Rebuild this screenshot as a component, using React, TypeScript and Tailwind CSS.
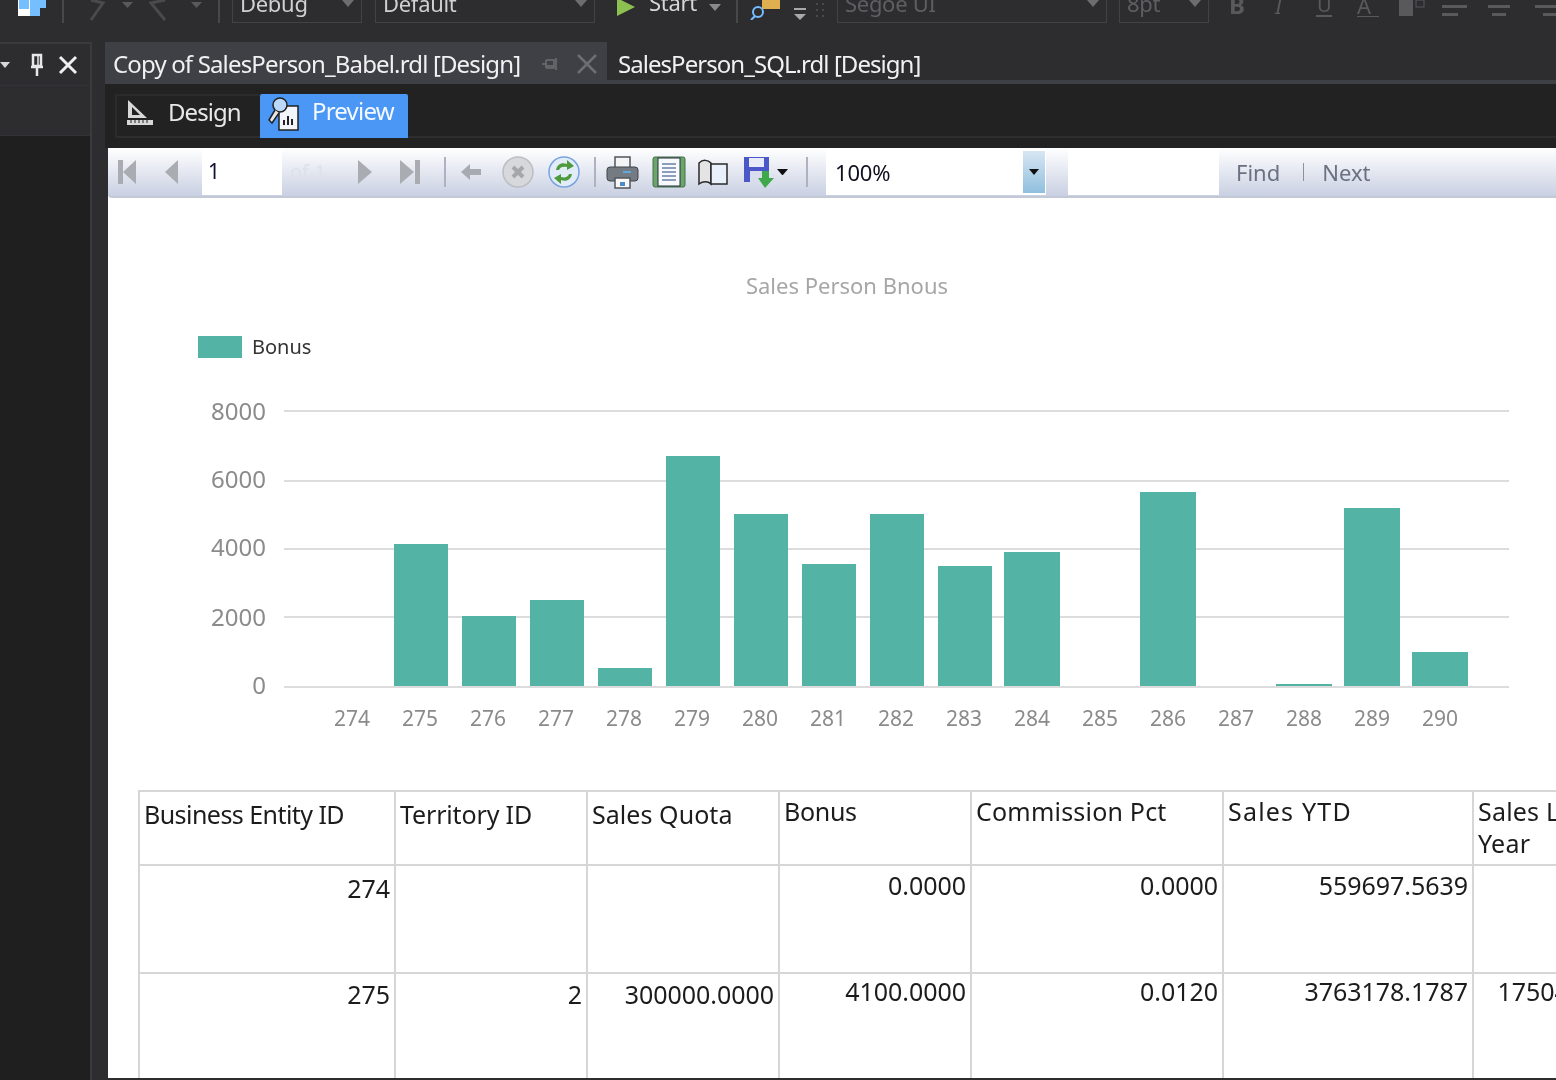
import React from "react";

const FONT = { fontFamily: '"Noto Sans", "Open Sans", sans-serif' };

const bars: [number, number, number][] = [
  [394, 448, 544], [462, 516, 616], [530, 584, 600], [598, 652, 668], [666, 720, 456],
  [734, 788, 514], [802, 856, 564], [870, 924, 514], [938, 992, 566], [1004, 1060, 552],
  [1140, 1196, 492], [1276, 1332, 684], [1344, 1400, 508], [1412, 1468, 652],
];
const grid: [number, string, number][] = [[411, "8000", 420], [481, "6000", 488], [549, "4000", 556], [617, "2000", 626], [687, "0", 694]];
const xLabels = ["274","275","276","277","278","279","280","281","282","283","284","285","286","287","288","289","290"];

function Caret({ color = "#6d6d70", w = 12 }: { color?: string; w?: number }) {
  return (
    <svg width={w} height={w / 2 + 1} viewBox="0 0 12 7"><path d="M0 0h12L6 7z" fill={color} /></svg>
  );
}

function Combo({ label, w, text = "#d0d0d0", ml }: { label: string; w: string; text?: string; ml: string }) {
  return (
    <div className={`${w} ${ml} h-[40px] border border-[#434346] flex items-center justify-between pl-[7px] pr-[7px] shrink-0`}>
      <span className="text-[22px] leading-none tracking-[-0.3px]" style={{ color: text }}>{label}</span>
      <Caret />
    </div>
  );
}

function TopToolbar() {
  return (
    <div className="h-[23px] flex items-end overflow-hidden shrink-0">
      <svg width="30" height="23" viewBox="0 0 30 23" className="ml-[17px] shrink-0">
        <rect x="1" y="0" width="12" height="16" fill="#ffffff" />
        <path d="M2 0h10v9H2z" fill="#75beff" />
        <path d="M13 0h16v8h-6v8h-10z" fill="#75beff" />
      </svg>
      <div className="w-[2px] h-[23px] bg-[#48484b] ml-[15px] shrink-0" />
      <svg width="143" height="23" viewBox="0 0 143 23" className="ml-[11px] shrink-0">
        <path d="M16 0 L28 3 L16 20" stroke="#4a4a4d" strokeWidth="3" fill="none" />
        <path d="M47 2h11l-5.500 6z" fill="#59595c" />
        <path d="M90 0 L76 3 L90 20" stroke="#4a4a4d" strokeWidth="3" fill="none" />
        <path d="M116 2h11l-5.500 6z" fill="#59595c" />
      </svg>
      <div className="w-[2px] h-[23px] bg-[#48484b] shrink-0" />
      <Combo label="Debug" w="w-[130px]" ml="ml-[12px]" />
      <Combo label="Default" w="w-[220px]" ml="ml-[13px]" />
      <svg width="20" height="18" viewBox="0 0 20 18" className="ml-[21px] mb-[7px] shrink-0"><path d="M1 0 L19 9 L1 18z" fill="#8cc152" /></svg>
      <span className="text-[22px] leading-none tracking-[-0.3px] text-[#d8d8d8] ml-[13px] mb-[10px] w-[47px] shrink-0">Start</span>
      <div className="ml-[13px] mb-[12px]"><Caret color="#8a8a8d" /></div>
      <div className="w-[2px] h-[23px] bg-[#48484b] ml-[15px] shrink-0" />
      <svg width="32" height="20" viewBox="0 0 32 20" className="ml-[12px] mb-[3px] shrink-0">
        <path d="M12 0h18v9H12z" fill="#e0b050" />
        <circle cx="8" cy="12" r="5" stroke="#75beff" strokeWidth="2" fill="none" />
        <path d="M5 16 L1 20" stroke="#75beff" strokeWidth="2" />
      </svg>
      <svg width="14" height="20" viewBox="0 0 14 20" className="ml-[11px] shrink-0">
        <rect x="1" y="5" width="12" height="2" fill="#a8a8a8" /><path d="M1 11h12l-6 6z" fill="#a8a8a8" />
      </svg>
      <svg width="12" height="22" viewBox="0 0 12 22" className="ml-[8px] shrink-0"><g fill="#49494c"><rect x="1" y="2" width="2" height="2" /><rect x="7" y="2" width="2" height="2" /><rect x="1" y="8" width="2" height="2" /><rect x="7" y="8" width="2" height="2" /><rect x="1" y="14" width="2" height="2" /><rect x="7" y="14" width="2" height="2" /></g></svg>
      <Combo label="Segoe UI" w="w-[270px]" ml="ml-[10px]" text="#5f5f62" />
      <Combo label="8pt" w="w-[90px]" ml="ml-[12px]" text="#5f5f62" />
      <svg width="330" height="23" viewBox="0 0 330 23" className="ml-[20px] shrink-0">
        <g fill="#59595c" fontFamily="Noto Sans">
          <text x="0" y="14" fontSize="24" fontWeight="700">B</text>
          <text x="46" y="14" fontSize="22" fontStyle="italic">I</text>
          <text x="88" y="12" fontSize="20">U</text>
          <rect x="87" y="15" width="16" height="2" />
          <text x="128" y="14" fontSize="22">A</text>
          <rect x="128" y="16" width="22" height="1" />
          <rect x="170" y="0" width="14" height="16" />
          <rect x="187" y="0" width="8" height="7" fill="none" stroke="#59595c" />
          <rect x="213" y="5" width="25" height="3" /><rect x="213" y="13" width="16" height="3" />
          <rect x="259" y="5" width="22" height="3" /><rect x="263" y="13" width="14" height="3" />
          <rect x="306" y="5" width="25" height="3" /><rect x="314" y="13" width="18" height="3" />
        </g>
      </svg>
    </div>
  );
}

function LeftPanel() {
  return (
    <div className="w-[92px] shrink-0 flex flex-col border-r-2 border-[#3a3a3d] border-t-2">
      <div className="h-[42px] bg-[#2d2d30] border-b border-[#333337] flex items-center justify-end pr-[12px] gap-[14px] shrink-0">
        <svg width="10" height="6" viewBox="0 0 10 6" className="mr-auto"><path d="M0 0h10L5 6z" fill="#d8d8d8" /></svg>
        <svg width="14" height="24" viewBox="0 0 14 24"><path d="M3 2h8v11H3zM1 14h12M7 14v9" stroke="#e8e8e8" strokeWidth="2.500" fill="none" /><path d="M8 3v10" stroke="#e8e8e8" strokeWidth="1.500" /></svg>
        <svg width="20" height="20" viewBox="0 0 20 20"><path d="M2 2 L18 18 M18 2 L2 18" stroke="#efefef" strokeWidth="3" /></svg>
      </div>
      <div className="h-[50px] bg-[#2d2d30] border-b border-[#333337] shrink-0" />
      <div className="flex-1 bg-[#1f1f20]" />
    </div>
  );
}

function NavIcon({ kind }: { kind: "first" | "prev" | "next" | "last" }) {
  const d = {
    first: "M2 0h5v24H2zM20 0v24L7 12z",
    prev: "M16 0v24L3 12z",
    next: "M1 0v24L15 12z",
    last: "M0 0v24L14 12zM15 0h5v24h-5z",
  }[kind];
  return <svg width="20" height="24" viewBox="0 0 20 24" className="shrink-0"><path d={d} fill="#a9adb1" /></svg>;
}

function Sep({ ml }: { ml: string }) {
  return <div className={`${ml} w-[2px] h-[30px] bg-[#aeb2c0] shrink-0`} />;
}

function ReportToolbar() {
  return (
    <div className="h-[50px] shrink-0 flex items-center rounded-bl-[4px] bg-gradient-to-b from-white to-[#c9d0e2] border-b-2 border-[#c3c8d6]">
      <div className="ml-[8px]"><NavIcon kind="first" /></div>
      <div className="ml-[26px]"><NavIcon kind="prev" /></div>
      <div className="ml-[20px] w-[80px] h-[46px] bg-white flex items-center pl-[6px] text-[21px] text-[#101030] shrink-0">1</div>
      <span className="ml-[8px] w-[48px] text-[20px] text-[#dde1ec] shrink-0">of 1</span>
      <div className="ml-[19px]"><NavIcon kind="next" /></div>
      <div className="ml-[23px]"><NavIcon kind="last" /></div>
      <Sep ml="ml-[24px]" />
      <svg width="20" height="18" viewBox="0 0 20 18" className="ml-[15px] shrink-0"><path d="M0 9 L9 1v5h11v6H9v5z" fill="#a7abb0" /></svg>
      <svg width="32" height="32" viewBox="0 0 32 32" className="ml-[21px] shrink-0">
        <circle cx="16" cy="16" r="15" fill="#d6d8dc" stroke="#bcbec2" strokeWidth="1.500" />
        <path d="M11 11 L21 21 M21 11 L11 21" stroke="#a4a6aa" strokeWidth="4" />
      </svg>
      <svg width="32" height="32" viewBox="0 0 32 32" className="ml-[14px] shrink-0">
        <circle cx="16" cy="16" r="15" fill="#e2ecf8" stroke="#7aa4e0" strokeWidth="1.500" />
        <path d="M8 14 C9 8 14 6 19 8 L19 4 L26 10 L19 14 L19 11 C15 10 12 11 11 14z" fill="#4e9a3c" />
        <path d="M24 18 C23 24 18 26 13 24 L13 28 L6 22 L13 18 L13 21 C17 22 20 21 21 18z" fill="#4e9a3c" />
      </svg>
      <Sep ml="ml-[14px]" />
      <svg width="33" height="33" viewBox="0 0 33 33" className="ml-[10px] shrink-0">
        <rect x="9" y="1" width="15" height="11" fill="#f4f4f4" stroke="#50555a" strokeWidth="1.500" />
        <rect x="1" y="11" width="31" height="14" rx="3" fill="#757b82" stroke="#41464c" />
        <rect x="17" y="15" width="8" height="2" fill="#5fa8e0" />
        <rect x="9" y="22" width="15" height="10" fill="#f8f8f8" stroke="#50555a" strokeWidth="1.500" />
        <rect x="14" y="26" width="5" height="4" fill="#4a8cc8" />
      </svg>
      <svg width="34" height="32" viewBox="0 0 34 32" className="ml-[13px] shrink-0">
        <rect x="1" y="1" width="32" height="30" rx="2" fill="#6aa56a" stroke="#46704a" />
        <rect x="6" y="2" width="22" height="28" fill="#f8f9fd" stroke="#243040" />
        <path d="M10 8h14M10 12h14M10 16h14M10 20h14M10 24h14" stroke="#6a80a8" strokeWidth="1.500" />
      </svg>
      <svg width="32" height="28" viewBox="0 0 32 28" className="ml-[11px] shrink-0">
        <path d="M2 26 V5 C6 1 11 2 14 5 V26 C11 23 6 23 2 26z" fill="#e4e4e4" stroke="#2a2a2a" strokeWidth="1.500" />
        <rect x="14" y="6" width="16" height="20" fill="#e8f0fb" stroke="#2a2a2a" strokeWidth="1.500" />
      </svg>
      <svg width="34" height="32" viewBox="0 0 34 32" className="ml-[14px] shrink-0">
        <rect x="1" y="1" width="25" height="25" fill="#4a58c8" />
        <rect x="6" y="2" width="15" height="9" fill="#e8ecf8" />
        <rect x="7" y="15" width="13" height="11" fill="#d8dcec" />
        <path d="M19 15h7v7h5L22 32 15 22h4z" fill="#3fa84a" />
      </svg>
      <div className="ml-[0px]"><Caret color="#101010" w={11} /></div>
      <Sep ml="ml-[18px]" />
      <div className="ml-[18px] w-[220px] h-[46px] bg-white flex items-center justify-between pl-[9px] pr-[1px] shrink-0">
        <span className="text-[22px] text-[#101020] tracking-[-0.2px]">100%</span>
        <div className="w-[22px] h-[42px] bg-gradient-to-b from-[#d8e6f2] to-[#8fbfde] flex items-center justify-center"><Caret color="#101010" w={10} /></div>
      </div>
      <div className="ml-[22px] w-[151px] h-[46px] bg-white shrink-0" />
      <span className="ml-[17px] text-[22px] text-[#6c7080] leading-none">Find</span>
      <div className="ml-[23px] w-px h-[18px] bg-[#8c90a0]" />
      <span className="ml-[18px] text-[22px] text-[#6c7080] leading-none">Next</span>
    </div>
  );
}

function Chart() {
  return (
    <svg width="1448" height="592" viewBox="108 198 1448 592" className="block shrink-0" fontFamily="Noto Sans">
      <text x="847" y="294" textAnchor="middle" fontSize="22" fill="#a6a6a6">Sales Person Bnous</text>
      <rect x="198" y="336" width="44" height="22" fill="#53b3a4" />
      <text x="252" y="354" fontSize="20" fill="#333">Bonus</text>
      {grid.map(([y, l, ty]) => (
        <g key={l}>
          <line x1="284" x2="1509" y1={y} y2={y} stroke="#dcdcdc" strokeWidth="2" />
          <text x="266" y={ty} textAnchor="end" fontSize="24" fill="#8b8b8b">{l}</text>
        </g>
      ))}
      {bars.map(([a, b, t]) => <rect key={a} x={a} y={t} width={b - a} height={686 - t} fill="#53b3a4" />)}
      {xLabels.map((l, i) => <text key={l} x={352 + i * 68} y="726" textAnchor="middle" fontSize="21" fill="#8b8b8b">{l}</text>)}
    </svg>
  );
}

const th = "border-2 border-[#d6d6d6] align-top text-left font-normal pl-[4px] pr-[4px] leading-[32px] text-[25px] text-[#1c1c1c]";
const td = "border-2 border-[#d6d6d6] align-top text-right font-normal px-[4px] leading-[32px] text-[25px] tracking-[-0.05px] text-[#1c1c1c]";

function ReportTable() {
  return (
    <div className="ml-[30px]">
      <table className="border-collapse table-fixed w-[1527px]">
        <colgroup>
          <col className="w-[256px]" /><col className="w-[192px]" /><col className="w-[192px]" /><col className="w-[192px]" />
          <col className="w-[252px]" /><col className="w-[250px]" /><col className="w-[193px]" />
        </colgroup>
        <tbody>
          <tr className="h-[74px]">
            <th className={`${th} pt-[6px] tracking-[-0.55px]`}>Business Entity ID</th>
            <th className={`${th} pt-[6px] tracking-[-0.15px]`}>Territory ID</th>
            <th className={`${th} pt-[6px] tracking-[0.05px]`}>Sales Quota</th>
            <th className={`${th} pt-[3px] tracking-[-0.3px]`}>Bonus</th>
            <th className={`${th} pt-[3px] tracking-[0.2px]`}>Commission Pct</th>
            <th className={`${th} pt-[3px] tracking-[1.2px]`}>Sales YTD</th>
            <th className={`${th} pt-[3px] tracking-[0.2px]`}>Sales Last<br />Year</th>
          </tr>
          <tr className="h-[108px]">
            <td className={`${td} pt-[6px]`}>274</td>
            <td className={td}></td>
            <td className={td}></td>
            <td className={`${td} pt-[3px]`}>0.0000</td>
            <td className={`${td} pt-[3px]`}>0.0000</td>
            <td className={`${td} pt-[3px]`}>559697.5639</td>
            <td className={td}></td>
          </tr>
          <tr className="h-[108px]">
            <td className={`${td} pt-[4px]`}>275</td>
            <td className={`${td} pt-[4px]`}>2</td>
            <td className={`${td} pt-[4px]`}>300000.0000</td>
            <td className={`${td} pt-[1px]`}>4100.0000</td>
            <td className={`${td} pt-[1px]`}>0.0120</td>
            <td className={`${td} pt-[1px]`}>3763178.1787</td>
            <td className={`${td} pt-[1px]`}>1750406.4785</td>
          </tr>
        </tbody>
      </table>
    </div>
  );
}

export default function App() {
  return (
    <div className="w-[1556px] h-[1080px] overflow-hidden bg-[#2d2d30] flex flex-col blur-[0.4px]" style={FONT}>
      <TopToolbar />
      <div className="h-[19px] shrink-0" />
      <div className="flex-1 flex min-h-0">
        <LeftPanel />
        <div className="flex-1 min-w-0 flex flex-col pl-[13px]">
          <div className="h-[38px] flex items-stretch shrink-0">
            <div className="w-[502px] bg-[#3f3f46] flex items-center pl-[8px] pt-[5px] text-[24px] tracking-[-0.85px] whitespace-nowrap text-[#f1f1f1] shrink-0">
              <span>Copy of SalesPerson_Babel.rdl [Design]</span>
              <svg width="16" height="14" viewBox="0 0 16 14" className="ml-[21px] shrink-0"><path d="M1 7h4M5 3v8M5 3h8v8H5M5 9h8M15 1v12" stroke="#6d6d72" strokeWidth="1.500" fill="none" /></svg>
              <svg width="20" height="20" viewBox="0 0 20 20" className="ml-[20px] shrink-0"><path d="M1 1 L19 19 M19 1 L1 19" stroke="#6d6d72" strokeWidth="2.500" /></svg>
            </div>
            <div className="pl-[11px] pt-[5px] flex items-center text-[24px] tracking-[-0.95px] whitespace-nowrap text-[#f1f1f1]">SalesPerson_SQL.rdl [Design]</div>
          </div>
          <div className="h-[4px] bg-[#3f3f46] shrink-0" />
          <div className="h-[64px] bg-[#222222] shrink-0 pl-[10px]">
            <div className="flex h-[54px] items-end border-b-2 border-[#2e2e30]">
              <div className="w-[145px] h-[44px] -mb-[2px] border-t-2 border-l-2 border-[#2b2b2d] flex items-center pl-[9px] pb-[10px] shrink-0">
                <svg width="28" height="30" viewBox="0 0 28 30" className="shrink-0">
                  <path d="M2 3 L2 21 L21 21z M6 10 L6 18 L14 18z" fill="#d8d8d8" fillRule="evenodd" />
                  <rect x="1" y="23" width="26" height="5" fill="#d8d8d8" />
                  <path d="M5 23v3M9 23v3M13 23v3M17 23v3M21 23v3" stroke="#222" strokeWidth="1" />
                </svg>
                <span className="ml-[14px] text-[24px] tracking-[-0.95px] text-[#e8e8e8]">Design</span>
              </div>
              <div className="w-[148px] h-[44px] -mb-[2px] bg-[#4a97f5] rounded-t-[2px] flex items-start pl-[7px] shrink-0">
                <svg width="32" height="36" viewBox="0 0 32 36" className="shrink-0 mt-[2px]">
                  <rect x="12" y="10" width="19" height="24" fill="#f2f5fb" stroke="#222" strokeWidth="1.500" />
                  <path d="M17 29v-5M21 29v-9M25 29v-6" stroke="#222" strokeWidth="2" />
                  <circle cx="13" cy="9" r="7" fill="#bcd8f8" stroke="#222" strokeWidth="1.500" />
                  <path d="M8 14 L2 24 L5 27 L12 17" fill="#e8e8e8" stroke="#222" strokeWidth="1.500" />
                </svg>
                <span className="ml-[13px] text-[24px] tracking-[-0.8px] leading-[34px] text-[#f4f8ff]">Preview</span>
              </div>
            </div>
          </div>
          <div className="flex-1 min-h-0 ml-[3px] mb-[2px] bg-white overflow-hidden flex flex-col">
            <ReportToolbar />
            <Chart />
            <ReportTable />
          </div>
        </div>
      </div>
    </div>
  );
}
